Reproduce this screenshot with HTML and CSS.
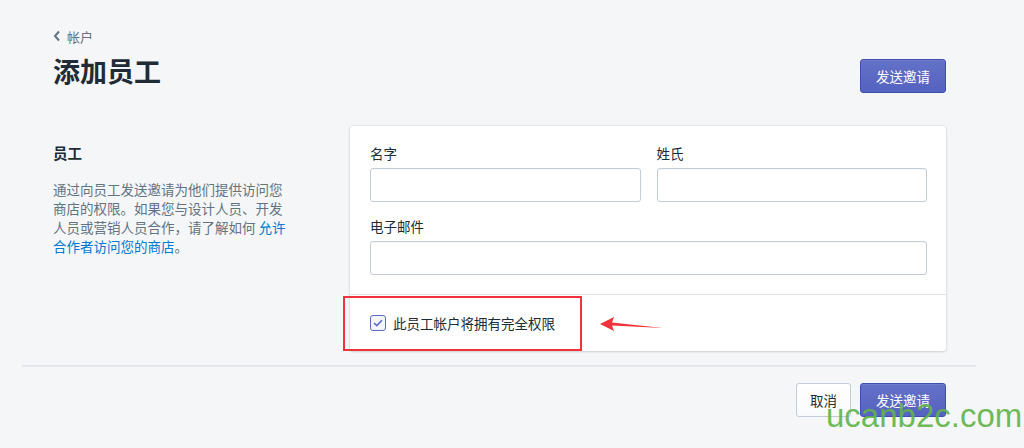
FILE: index.html
```html
<!DOCTYPE html>
<html lang="zh">
  <head>
    <meta charset="UTF-8" />
    <title>添加员工</title>
    <link rel="stylesheet" href="styles.css">
  </head>
  <body>
    <div class="page">
      <div class="wrap">
        <!-- Header -->
        <a class="back" href="#">
          <svg class="chev" width="8" height="12" viewBox="0 0 8 12">
            <path d="M6 1.5 L2 6 L6 10.5" fill="none" stroke="#637381" stroke-width="2" />
          </svg>
          帐户
        </a>
        <div class="head">
          <h1>添加员工</h1>
          <button class="btn btn-primary">发送邀请</button>
        </div>

        <!-- Staff section -->
        <div class="section">
          <div class="aside">
            <h2>员工</h2>
            <p>通过向员工发送邀请为他们提供访问您商店的权限。如果您与设计人员、开发人员或营销人员合作，请了解如何 <a href="#">允许合作者访问您的商店</a>。</p>
          </div>

          <div class="card">
            <div class="card-body">
              <div class="row">
                <div class="field">
                  <label>名字</label>
                  <input type="text" class="input" />
                </div>
                <div class="field">
                  <label>姓氏</label>
                  <input type="text" class="input" />
                </div>
              </div>
              <div class="field">
                <label>电子邮件</label>
                <input type="email" class="input" />
              </div>
            </div>
            <div class="card-foot">
              <label class="check">
                <span class="box">
                  <svg width="10" height="8" viewBox="0 0 10 8">
                    <path d="M1 4 L3.8 6.6 L9 1.2" fill="none" stroke="#5c6ac4" stroke-width="1.6" />
                  </svg>
                </span>
                此员工帐户将拥有完全权限
              </label>
              <div class="mark"></div>
              <svg class="arrow" width="70" height="20" viewBox="0 0 70 20">
                <path d="M1 8 L15 1 L13 6.5 L64 12 L13 9.5 L15 15 Z" fill="#f0323a" />
              </svg>
            </div>
          </div>
        </div>

        <div class="divider"></div>

        <div class="actions">
          <button class="btn btn-default">取消</button>
          <button class="btn btn-primary">发送邀请</button>
        </div>
      </div>
    </div>

    <div class="watermark">ucanb2c.com</div>
  </body>
</html>
```

FILE: styles.css
```css
:root {
  --bg: #f4f6f8;
  --ink: #212b36;
  --muted: #637381;
  --border: #c4cdd5;
  --indigo: #5c6ac4;
  --blue: #007ace;
}

body {
  margin: 0;
  background: var(--bg);
  font-family: "Noto Sans CJK SC", "Noto Sans", sans-serif;
  color: var(--ink);
  font-size: 13.5px;
}

.page {
  width: 954px;
  margin-left: 22px;
}

.wrap {
  padding: 26px 30px 0 31px;
}

.back {
  display: inline-flex;
  align-items: center;
  gap: 6px;
  color: var(--muted);
  font-size: 13px;
  text-decoration: none;
  height: 18px;
}

.head {
  display: flex;
  justify-content: space-between;
  align-items: flex-start;
  margin-top: 5px;
}

h1 {
  margin: 0;
  font-size: 27px;
  line-height: 40px;
  font-weight: 700;
}

.btn {
  font-family: inherit;
  font-size: 13.5px;
  height: 34px;
  padding: 0 15px;
  border-radius: 3px;
  cursor: pointer;
}

.btn-primary {
  background: linear-gradient(#6371c7, #5563c1);
  border: 1px solid #3f4eae;
  color: #fff;
  box-shadow: inset 0 1px 0 0 #6f7bcb;
}

.btn-default {
  background: linear-gradient(#fff, #f9fafb);
  border: 1px solid var(--border);
  color: var(--ink);
  padding: 0 13px;
}

.head .btn {
  height: 34px;
  margin-top: 8px;
}

.section {
  display: flex;
  margin-top: 33px;
}

.aside {
  width: 297px;
  flex-shrink: 0;
  padding-top: 17px;
}

h2 {
  margin: 0;
  font-size: 14.5px;
  font-weight: 700;
  line-height: 20px;
}

.aside p {
  width: 236px;
  margin: 17px 0 0;
  color: var(--muted);
  line-height: 19px;
}

.aside a {
  color: var(--blue);
  text-decoration: none;
}

.card {
  flex: 1;
  background: #fff;
  border-radius: 3px;
  box-shadow: 0 0 0 1px rgba(63, 63, 68, 0.05), 0 1px 3px 0 rgba(63, 63, 68, 0.15);
}

.card-body {
  padding: 17px 19px 19px 20px;
  display: flex;
  flex-direction: column;
  gap: 14px;
}

.row {
  display: grid;
  grid-template-columns: 1fr 1fr;
  gap: 16px;
}

.field label {
  display: block;
  line-height: 20px;
  margin-bottom: 5px;
}

.input {
  display: block;
  box-sizing: border-box;
  width: 100%;
  height: 34px;
  border: 1px solid var(--border);
  border-radius: 3px;
  box-shadow: inset 0 1px 0 0 rgba(99, 115, 129, 0.05);
}

.card-foot {
  position: relative;
  border-top: 1px solid #dfe3e8;
  padding: 18px 20px;
}

.check {
  display: flex;
  align-items: center;
  gap: 7px;
  line-height: 20px;
  color: var(--ink);
}

.box {
  box-sizing: border-box;
  width: 16px;
  height: 16px;
  border: 1px solid var(--indigo);
  border-radius: 3px;
  background: #f4f5fa;
  display: flex;
  align-items: center;
  justify-content: center;
}

/* annotation */
.mark {
  position: absolute;
  left: -7px;
  top: 1px;
  width: 235px;
  height: 51px;
  border: 2px solid #f0323a;
}

.arrow {
  position: absolute;
  left: 249px;
  top: 21px;
}

.divider {
  height: 2px;
  background: #e3e7eb;
  margin: 14px -30px 0 -31px;
}

.actions {
  display: flex;
  justify-content: flex-end;
  gap: 9px;
  margin-top: 16px;
}

.watermark {
  position: absolute;
  left: 826px;
  top: 397px;
  font-family: "Liberation Sans", Arial, sans-serif;
  font-size: 33px;
  color: rgba(98, 180, 72, 0.92);
}
```
